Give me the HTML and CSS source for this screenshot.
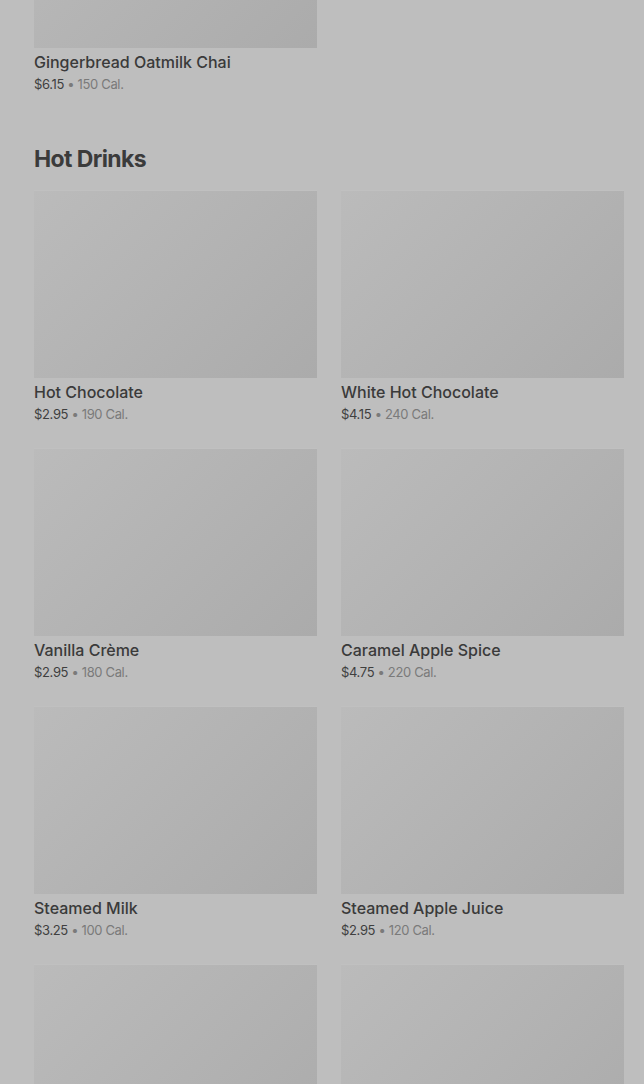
FILE: index.html
```html
<!DOCTYPE html>
<html lang="en">
<head>
    <meta charset="UTF-8">
    <meta name="viewport" content="width=device-width, initial-scale=1.0">
    <title>Menu</title>
    <link rel="stylesheet" href="styles.css">
</head>
<body>

    <div class="menu">
        <!-- Previous section (scrolled past) -->
        <section class="menu-section scrolled">
            <div class="item-grid">
                <div class="item">
                    <div class="item-image"></div>
                    <div class="item-name">Gingerbread Oatmilk Chai</div>
                    <div class="item-meta"><span class="price">$6.15</span> • 150 Cal.</div>
                </div>
            </div>
        </section>

        <!-- Hot Drinks -->
        <section class="menu-section">
            <h2>Hot Drinks</h2>
            <div class="item-grid">
                <div class="item">
                    <div class="item-image"></div>
                    <div class="item-name">Hot Chocolate</div>
                    <div class="item-meta"><span class="price">$2.95</span> • 190 Cal.</div>
                </div>
                <div class="item">
                    <div class="item-image"></div>
                    <div class="item-name">White Hot Chocolate</div>
                    <div class="item-meta"><span class="price">$4.15</span> • 240 Cal.</div>
                </div>
                <div class="item">
                    <div class="item-image"></div>
                    <div class="item-name">Vanilla Crème</div>
                    <div class="item-meta"><span class="price">$2.95</span> • 180 Cal.</div>
                </div>
                <div class="item">
                    <div class="item-image"></div>
                    <div class="item-name">Caramel Apple Spice</div>
                    <div class="item-meta"><span class="price">$4.75</span> • 220 Cal.</div>
                </div>
                <div class="item">
                    <div class="item-image"></div>
                    <div class="item-name">Steamed Milk</div>
                    <div class="item-meta"><span class="price">$3.25</span> • 100 Cal.</div>
                </div>
                <div class="item">
                    <div class="item-image"></div>
                    <div class="item-name">Steamed Apple Juice</div>
                    <div class="item-meta"><span class="price">$2.95</span> • 120 Cal.</div>
                </div>
                <div class="item">
                    <div class="item-image"></div>
                    <div class="item-name">&nbsp;</div>
                    <div class="item-meta">&nbsp;</div>
                </div>
                <div class="item">
                    <div class="item-image"></div>
                    <div class="item-name">&nbsp;</div>
                    <div class="item-meta">&nbsp;</div>
                </div>
            </div>
        </section>
    </div>

</body>
</html>
```

FILE: styles.css
```css
* {
    margin: 0;
    padding: 0;
    box-sizing: border-box;
}

html, body {
    background-color: #bebebe;
    overflow: hidden;
}

body {
    font-family: 'Inter', 'Liberation Sans', sans-serif;
    color: #3a3a3a;
    height: 1084px;
}

.menu {
    padding: 0 20px 0 34px;
}

.menu-section {
    margin-bottom: 47px;
}

/* page is scrolled so only the bottom of this card shows */
.menu-section.scrolled {
    margin-top: -140px;
    margin-bottom: 48px;
}

h2 {
    font-size: 23px;
    line-height: 34px;
    font-weight: 700;
    letter-spacing: -0.6px;
    color: #3b3b3b;
    margin-bottom: 14px;
}

.item-grid {
    display: grid;
    grid-template-columns: 1fr 1fr;
    column-gap: 24px;
    row-gap: 24px;
}

.item-image {
    height: 188px;
    background: linear-gradient(135deg, #bbbbbb 0%, #b3b3b3 50%, #ababab 100%);
    border-top: 1px solid #c0c0c0;
    margin-bottom: 2px;
}

.item-name {
    font-size: 16px;
    line-height: 24px;
    font-weight: 500;
    color: #3a3a3a;
}

.item-meta {
    font-size: 13px;
    line-height: 20px;
    color: #7a7a7a;
    letter-spacing: -0.35px;
}

.price {
    color: #3f3f3f;
}
```
